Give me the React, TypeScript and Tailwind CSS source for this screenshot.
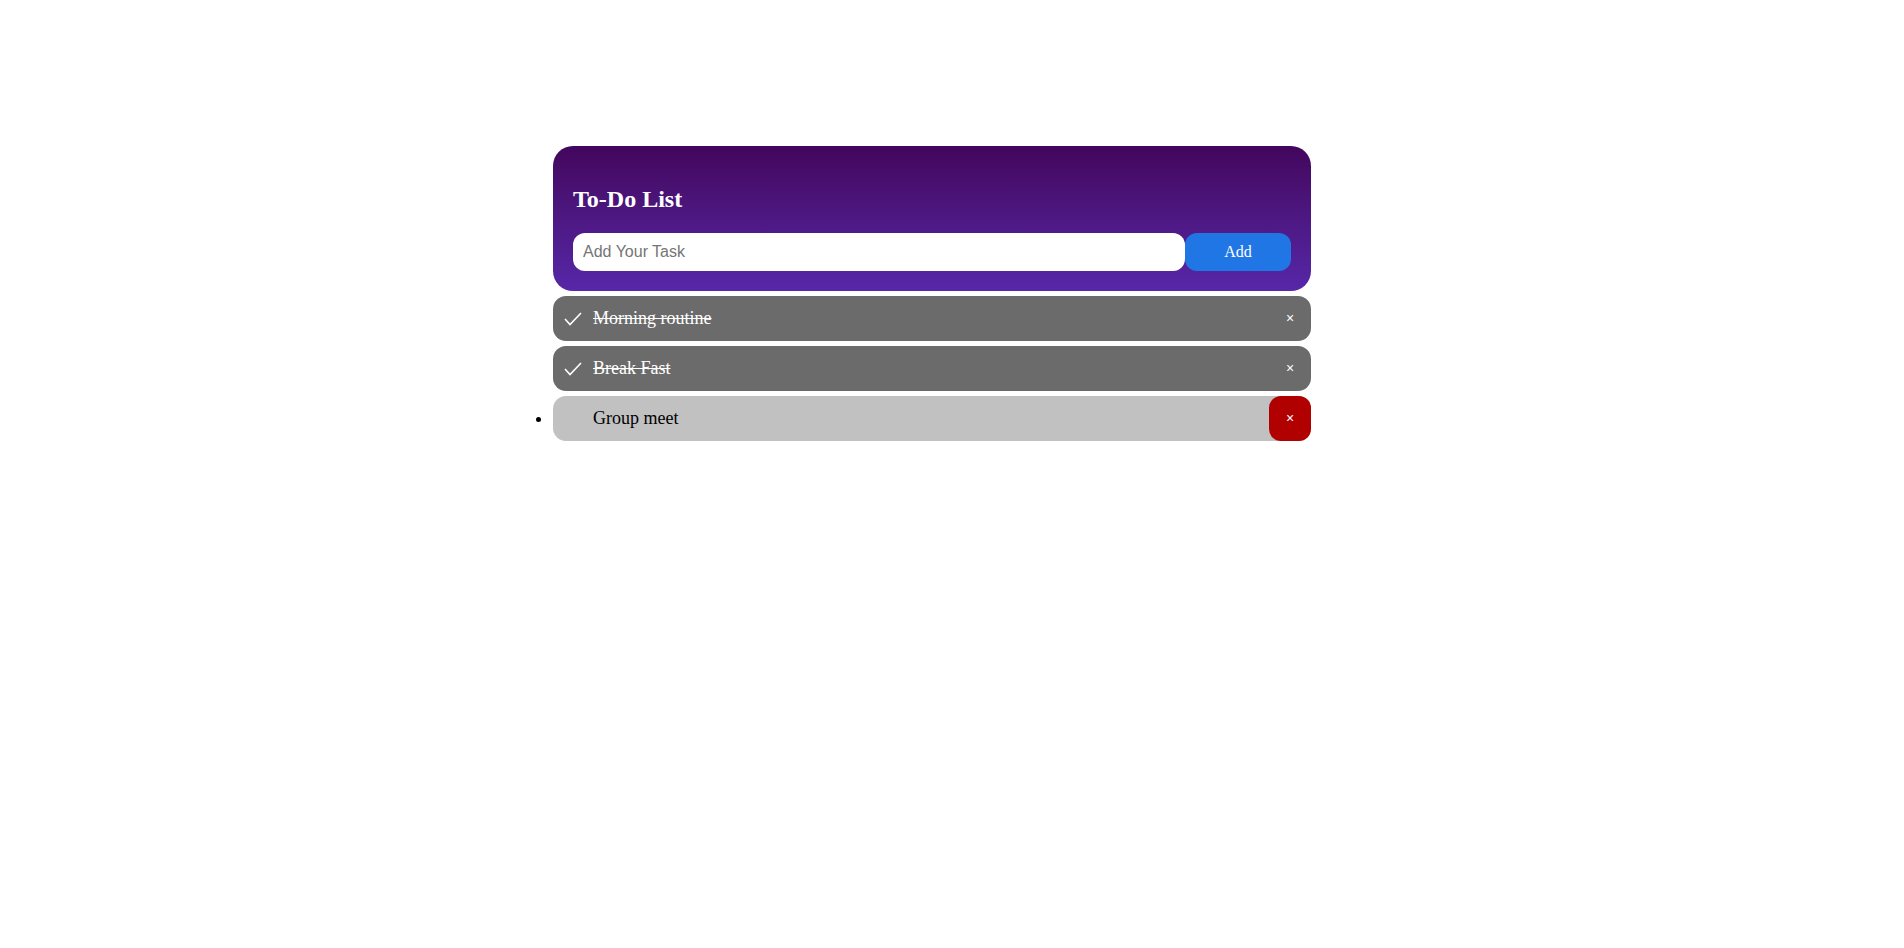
const tasks = [
  { id: 1, text: 'Morning routine', checked: true },
  { id: 2, text: 'Break Fast', checked: true },
  { id: 3, text: 'Group meet', checked: false },
];

function CheckMark() {
  return (
    <svg
      className="absolute left-[11px] top-1/2 -translate-y-1/2"
      width="18"
      height="14"
      viewBox="0 0 18 14"
      fill="none"
    >
      <polyline points="1,7 6,12.5 17,1" stroke="white" strokeWidth="1.6" />
    </svg>
  );
}

export default function App() {
  return (
    <div className="min-h-screen bg-white font-['Liberation_Serif',serif]">
      <div className="flex justify-center pr-[40px] pt-[146px]">
        <div className="w-[758px]">
          <div className="rounded-[20px] bg-gradient-to-b from-[#43065d] to-[#5627a9] px-5 pb-5 pt-[20px]">
            <h2 className="mt-[19px] mb-[20px] text-[24px] font-bold leading-[28px] text-white">
              To-Do List
            </h2>
            <div className="flex">
              <input
                className="h-[38px] flex-1 rounded-[12px] bg-white px-[10px] font-['Liberation_Sans',Arial,sans-serif] text-[16px] text-black outline-none placeholder:text-[#757575]"
                placeholder="Add Your Task"
              />
              <button className="h-[38px] w-[106px] rounded-[12px] bg-[#2176e6] text-[16px] text-white">
                Add
              </button>
            </div>
          </div>

          <ul className="mt-[5px] flex flex-col gap-[5px]">
            {tasks.map((t) => (
              <li
                key={t.id}
                className={
                  t.checked
                    ? 'relative flex h-[45px] list-none items-center rounded-[13px] bg-[#6b6b6b] pl-[40px] text-[18px] text-white line-through'
                    : 'relative flex h-[45px] list-disc items-center rounded-[13px] bg-[#c2c1c2] pl-[40px] text-[18px] text-black'
                }
                style={t.checked ? undefined : { display: 'list-item', lineHeight: '45px' }}
              >
                {t.checked && <CheckMark />}
                {t.text}
                <span
                  className={
                    t.checked
                      ? "absolute right-0 top-0 flex h-[45px] w-[42px] items-center justify-center font-['Liberation_Sans',Arial,sans-serif] text-[14px] text-white no-underline"
                      : "absolute right-0 top-0 flex h-[45px] w-[42px] items-center justify-center rounded-[12px] bg-[#b00000] font-['Liberation_Sans',Arial,sans-serif] text-[14px] text-white"
                  }
                >
                  ×
                </span>
              </li>
            ))}
          </ul>
        </div>
      </div>
    </div>
  );
}
